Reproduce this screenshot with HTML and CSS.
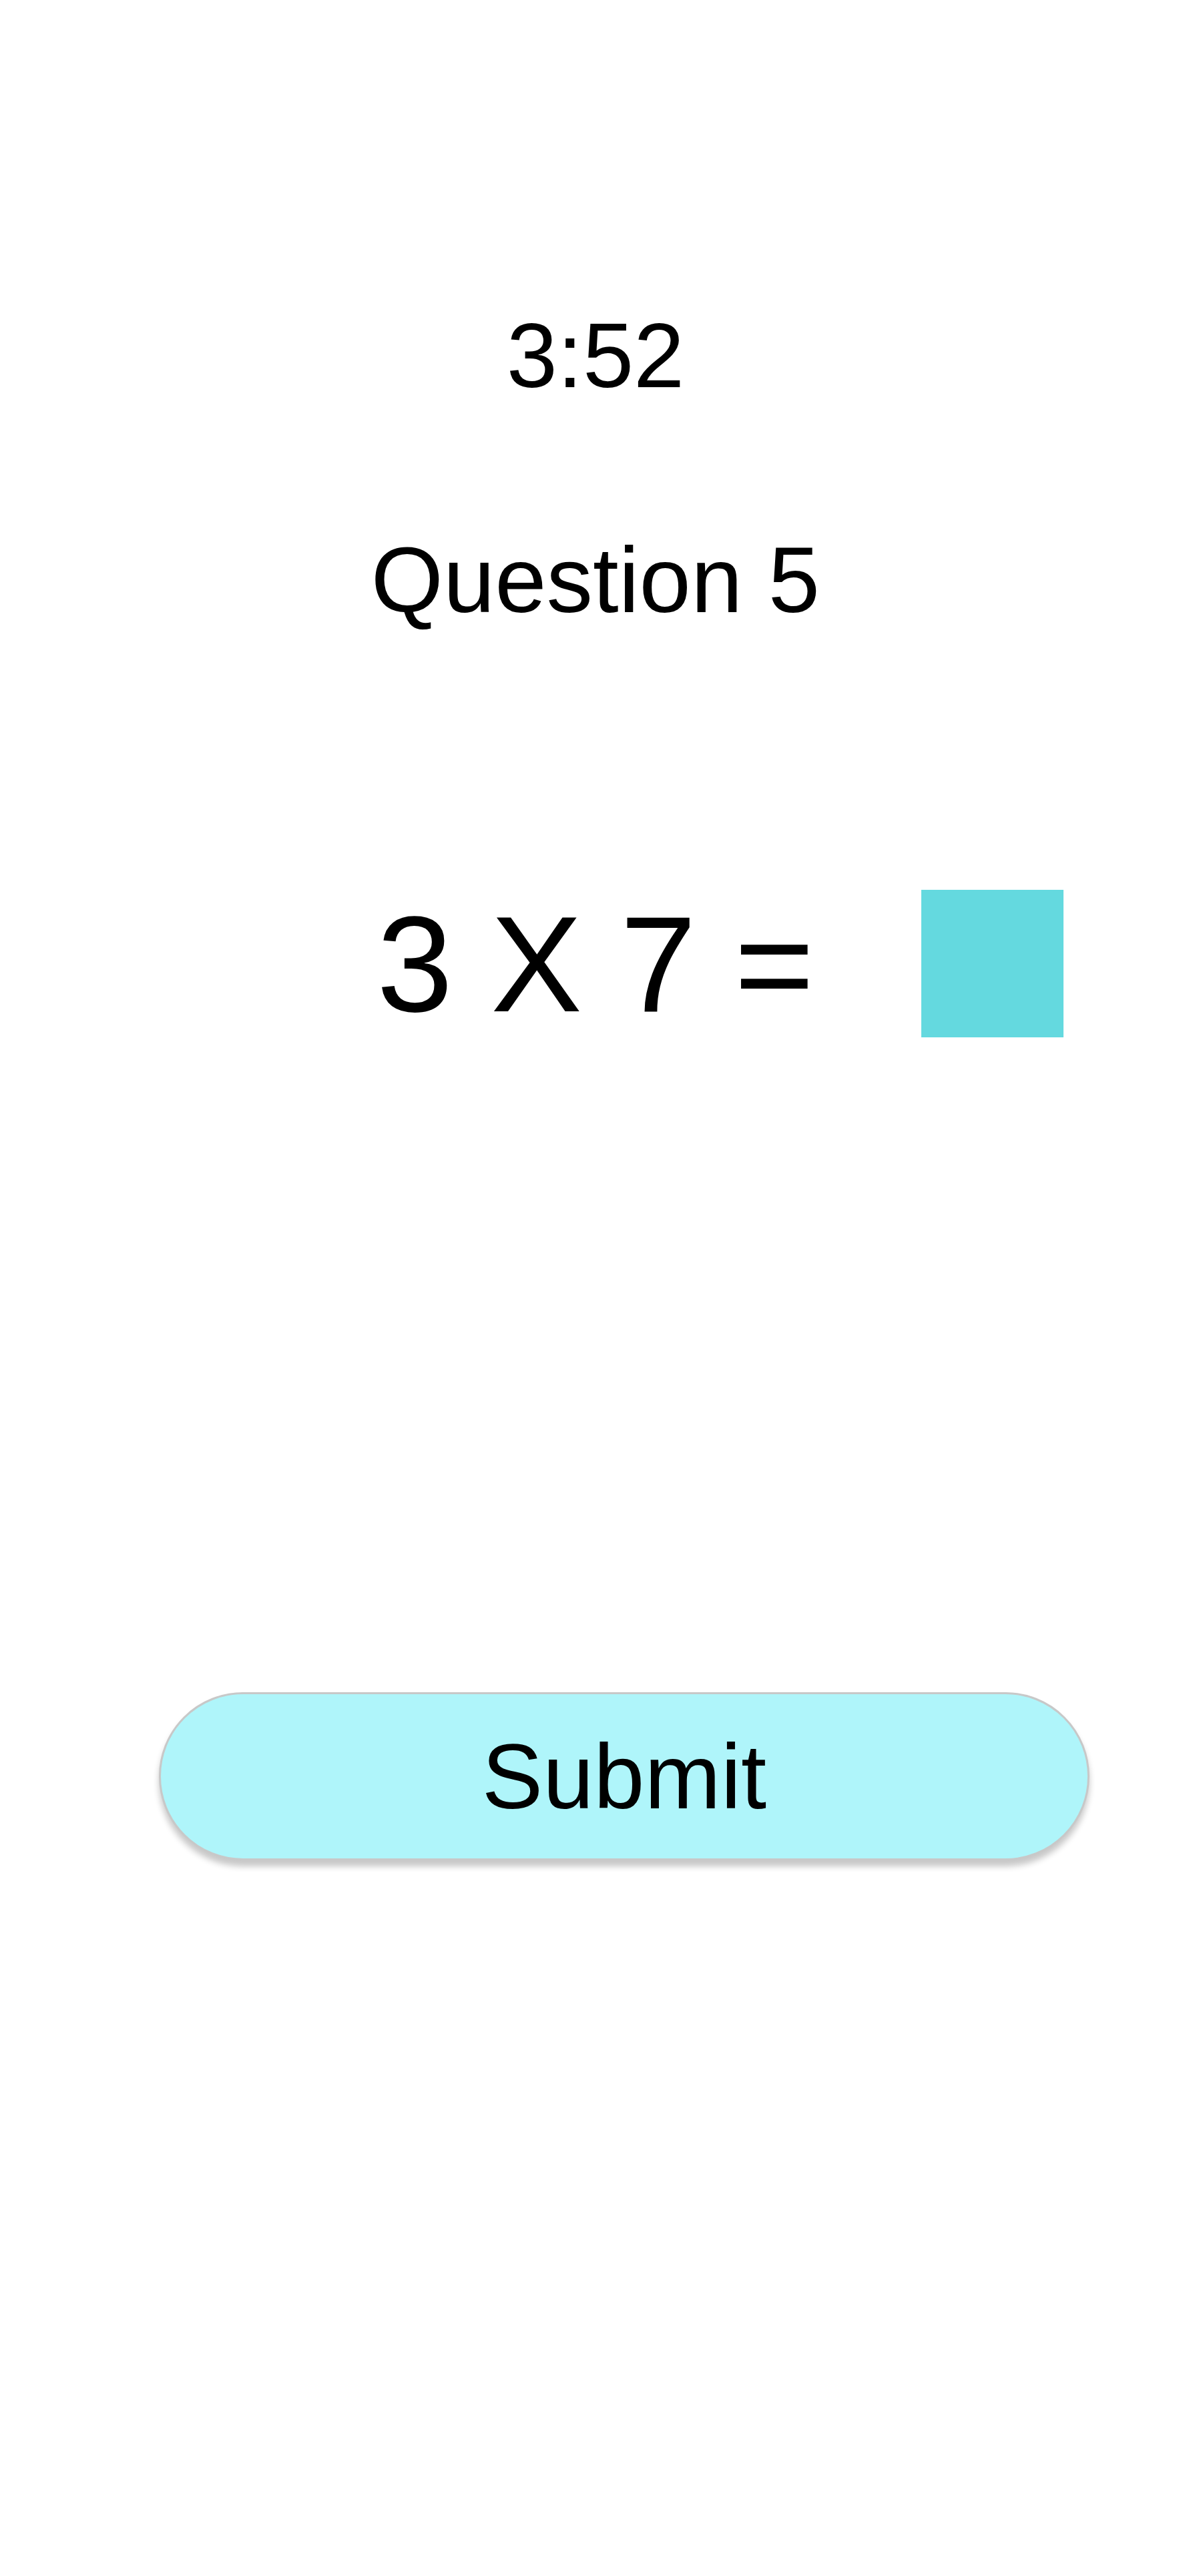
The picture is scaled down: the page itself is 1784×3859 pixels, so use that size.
FILE: index.html
```html
<!DOCTYPE html>
<html lang="en">
<head>
<meta charset="utf-8">
<title>Quiz</title>
<link rel="stylesheet" href="styles.css">
</head>
<body>
<main class="quiz">
  <div class="timer">3:52</div>
  <h1 class="question-title">Question 5</h1>
  <div class="equation">
    <span class="equation-spacer"></span>
    <span class="equation-text">3 X 7 =</span>
    <span class="answer-cell"><span class="answer-box"></span></span>
  </div>
  <div class="actions">
    <button class="submit-btn" type="button">Submit</button>
  </div>
</main>
</body>
</html>
```

FILE: styles.css
```css
html, body {
  margin: 0;
  padding: 0;
  background: #ffffff;
}

body {
  font-family: "Liberation Sans", Arial, sans-serif;
  color: #000000;
}

.quiz {
  min-height: 3859px;
  display: flex;
  flex-direction: column;
  padding-top: 464px;
  box-sizing: border-box;
}

.timer {
  font-size: 137px;
  line-height: 1;
  text-align: center;
}

.question-title {
  margin: 198px 0 0;
  font-size: 139px;
  font-weight: 400;
  line-height: 1;
  text-align: center;
}

.equation {
  margin-top: 395px;
  display: grid;
  grid-template-columns: 1fr auto 1fr;
  align-items: center;
}

.equation-text {
  font-size: 205px;
  line-height: 1;
  white-space: pre;
}

.answer-cell {
  display: flex;
}

.answer-box {
  display: block;
  width: 213px;
  height: 221px;
  margin-left: 160px;
  background: #64d9df;
}

.actions {
  margin-top: 981px;
  padding-left: 238px;
}

.submit-btn {
  display: block;
  width: 1394px;
  height: 252px;
  border: 3px solid #c8c8c8;
  border-radius: 126px;
  background: #aff5fa;
  box-shadow: 0 9px 10px rgba(0, 0, 0, 0.22);
  font-family: "Liberation Sans", Arial, sans-serif;
  font-size: 137px;
  line-height: 1;
  color: #000000;
  padding: 0;
  box-sizing: border-box;
  text-align: center;
  cursor: pointer;
}
```
